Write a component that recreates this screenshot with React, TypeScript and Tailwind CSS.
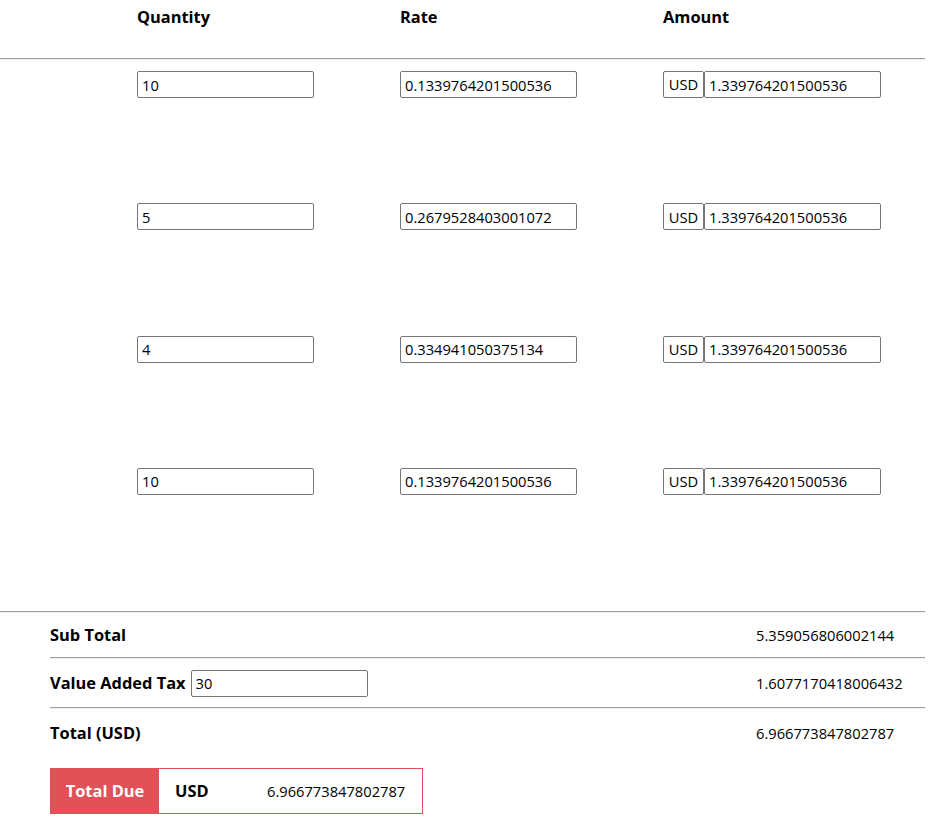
import type { JSX } from "react";

type Line = {
  quantity: string;
  rate: string;
  amount: string;
};

const lines: Line[] = [
  { quantity: "10", rate: "0.1339764201500536", amount: "1.339764201500536" },
  { quantity: "5", rate: "0.2679528403001072", amount: "1.339764201500536" },
  { quantity: "4", rate: "0.334941050375134", amount: "1.339764201500536" },
  { quantity: "10", rate: "0.1339764201500536", amount: "1.339764201500536" },
];

const inputCls =
  "h-[27px] w-[177px] rounded-[2px] border border-[#767676] bg-white px-[4px] text-[14.7px] text-black outline-none";

function Divider({ inset = false }: { inset?: boolean }): JSX.Element {
  return (
    <div
      className={
        "border-t border-b border-t-[#a0a0a0] border-b-[#eeeeee] " +
        (inset ? "ml-[50px]" : "")
      }
    />
  );
}

export default function App(): JSX.Element {
  return (
    <div
      className="min-h-screen w-[925px] bg-white text-black"
      style={{ fontFamily: '"Open Sans", "Noto Sans", sans-serif' }}
    >
      {/* table header */}
      <div className="grid h-[58px] grid-cols-[263px_263px_263px] pl-[137px] pt-[5px] text-[16.4px] font-bold">
        <div>Quantity</div>
        <div>Rate</div>
        <div>Amount</div>
      </div>
      <Divider />

      {/* line items */}
      <div className="pb-[22px]">
        {lines.map((line, i) => (
          <div
            key={i}
            className="grid h-[132.3px] grid-cols-[263px_263px_263px] pl-[137px] pt-[11px]"
          >
            <div>
              <input className={inputCls} defaultValue={line.quantity} />
            </div>
            <div>
              <input className={inputCls} defaultValue={line.rate} />
            </div>
            <div className="flex">
              <span className="flex h-[27px] w-[41px] items-center justify-center rounded-[2px] border border-[#767676] text-[14.7px]">
                USD
              </span>
              <input className={inputCls} defaultValue={line.amount} />
            </div>
          </div>
        ))}
      </div>

      {/* totals */}
      <Divider />
      <div className="flex h-[44px] items-center pl-[50px]">
        <div className="w-[706px] text-[16.4px] font-bold">Sub Total</div>
        <div className="text-[14.7px]">5.359056806002144</div>
      </div>
      <Divider inset />
      <div className="flex h-[48px] items-center pl-[50px]">
        <div className="flex w-[706px] items-center gap-[5px]">
          <span className="text-[16.4px] font-bold">Value Added Tax</span>
          <input className={inputCls + " h-[26px]"} defaultValue="30" />
        </div>
        <div className="text-[14.7px]">1.6077170418006432</div>
      </div>
      <Divider inset />
      <div className="flex h-[48px] items-center pl-[50px]">
        <div className="w-[706px] text-[16.4px] font-bold">Total (USD)</div>
        <div className="text-[14.7px]">6.966773847802787</div>
      </div>

      <div className="pl-[50px] pt-[11px]">
        <div className="flex h-[46px] w-[373px] border border-[#e05257]">
          <div className="flex w-[108px] items-center justify-center bg-[#e05257] text-[16.4px] font-bold text-white">
            Total Due
          </div>
          <div className="flex items-center pl-[16px]">
            <span className="w-[92px] text-[16.4px] font-bold">USD</span>
            <span className="text-[14.7px]">6.966773847802787</span>
          </div>
        </div>
      </div>
    </div>
  );
}
